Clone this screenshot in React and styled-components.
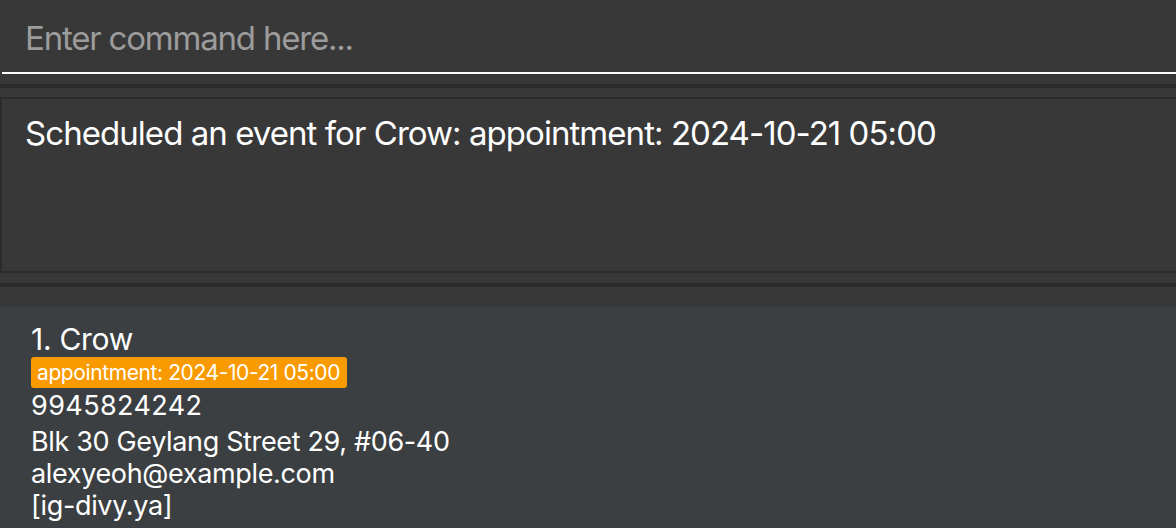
import styled, { createGlobalStyle } from 'styled-components';

const GlobalStyle = createGlobalStyle`
  html, body {
    margin: 0;
    padding: 0;
    background: #383838;
    font-family: Inter, "Noto Sans", sans-serif;
    overflow: hidden;
  }
`;

const Page = styled.div`
  width: 1176px;
  height: 528px;
  display: flex;
  flex-direction: column;
  background: #383838;
  overflow: hidden;
`;

// Each pane is closed off by a dark divider line
const Pane = styled.section`
  padding: ${(p) => p.$padding};
  border-bottom: 4px solid #2b2b2b;
`;

const CommandInput = styled.input`
  box-sizing: border-box;
  display: block;
  width: calc(100% - 2px);
  height: 74px;
  margin-left: 2px;
  padding: 4px 23px 0;
  border: none;
  border-bottom: 2px solid #ffffff;
  background: #383838;
  color: #ffffff;
  font-family: inherit;
  font-size: 33px;
  letter-spacing: -1.2px;
  outline: none;

  &::placeholder {
    color: #9c9c9c;
  }
`;

const ResultBox = styled.div`
  box-sizing: border-box;
  height: 176px;
  padding: 14px 23px;
  border: 2px solid #2b2b2b;
  border-right: none;
  color: #ffffff;
  font-size: 33px;
  line-height: 40px;
  letter-spacing: -0.95px;
`;

const PersonList = styled.ul`
  flex: 1;
  margin: 20px 0 0;
  padding: 0;
  list-style: none;
  background: #3c3f41;
`;

const Card = styled.li`
  display: flex;
  flex-direction: column;
  align-items: flex-start;
  padding: 14px 31px 0;
  color: #ffffff;
`;

const Name = styled.div`
  font-size: 30px;
  line-height: 36px;
  letter-spacing: -0.3px;
`;

const Tags = styled.div`
  display: flex;
  gap: 6px;
`;

const Tag = styled.span`
  box-sizing: border-box;
  height: 31px;
  padding: 0 7px 0 6px;
  border-radius: 3px;
  background: #f89a00;
  color: #ffffff;
  font-size: 21px;
  line-height: 31px;
  letter-spacing: -0.4px;
`;

const Field = styled.div`
  margin-top: ${(p) => p.$gap || 0}px;
  font-size: 27px;
  line-height: 32px;
  letter-spacing: ${(p) => (p.$digits ? '0.4px' : '-0.35px')};
`;

const person = {
  name: 'Crow',
  tags: ['appointment: 2024-10-21 05:00'],
  phone: '9945824242',
  address: 'Blk 30 Geylang Street 29, #06-40',
  email: 'alexyeoh@example.com',
  socials: '[ig-divy.ya]',
};

export default function App() {
  return (
    <Page>
      <GlobalStyle />
      <Pane $padding="0 0 10px">
        <CommandInput placeholder="Enter command here..." />
      </Pane>
      <Pane $padding="9px 0 10px">
        <ResultBox>
          Scheduled an event for Crow: appointment: 2024-10-21 05:00
        </ResultBox>
      </Pane>
      <PersonList>
        <Card>
          <Name>1. {person.name}</Name>
          <Tags>
            {person.tags.map((tag) => (
              <Tag key={tag}>{tag}</Tag>
            ))}
          </Tags>
          <Field $gap={2} $digits>
            {person.phone}
          </Field>
          <Field $gap={4}>{person.address}</Field>
          <Field>{person.email}</Field>
          <Field>{person.socials}</Field>
        </Card>
      </PersonList>
    </Page>
  );
}
